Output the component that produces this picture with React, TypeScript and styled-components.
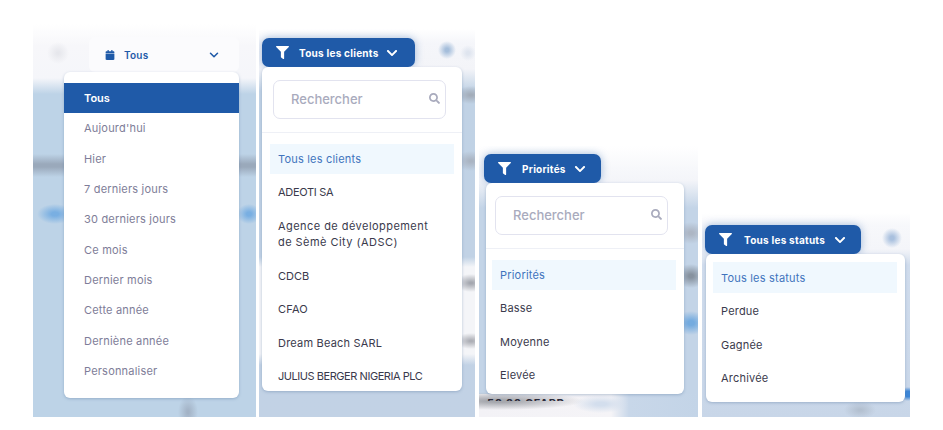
import React from "react";
import styled, { createGlobalStyle } from "styled-components";
import { FaFilter, FaChevronDown, FaSearch, FaCalendar } from "react-icons/fa";
import { ChevronDown } from "lucide-react";

const Global = createGlobalStyle`
  html, body { margin: 0; padding: 0; background: #fff; }
  body { font-family: "Inter", "Noto Sans", "Liberation Sans", sans-serif; }
`;

const Page = styled.div`
  width: 943px;
  height: 430px;
  box-sizing: border-box;
  padding: 0 0 13px 33px;
  display: flex;
  align-items: flex-end;
  overflow: hidden;
`;

const Panel = styled.section<{ $w: number; $h: number; $pl: number; $pt: number; $bg: string; $mr: number }>`
  width: ${(p) => p.$w}px;
  height: ${(p) => p.$h}px;
  margin-right: ${(p) => p.$mr}px;
  padding: ${(p) => p.$pt}px 0 0 ${(p) => p.$pl}px;
  box-sizing: border-box;
  flex: none;
  overflow: hidden;
  background: ${(p) => p.$bg};
`;

const GhostTrigger = styled.div`
  width: 150px;
  height: 35px;
  margin-left: 25px;
  box-sizing: border-box;
  padding: 0 18px 0 16px;
  display: flex;
  align-items: center;
  border-radius: 6px;
  background: #fbfbfd;
  color: #1f5aa8;
  font-size: 10px;
  font-weight: 600;
  letter-spacing: 0.2px;
  svg:first-child { margin-right: 9px; }
  span { flex: 1; }
`;

const SolidTrigger = styled.div<{ $w: number; $gap: number }>`
  width: ${(p) => p.$w}px;
  height: 29px;
  box-sizing: border-box;
  padding-left: 14px;
  display: flex;
  align-items: center;
  gap: ${(p) => p.$gap}px;
  border-radius: 7px;
  background: #1f5aa8;
  color: #fff;
  font-size: 10px;
  font-weight: 700;
  letter-spacing: 0.25px;
  white-space: nowrap;
  box-shadow: 0 0 9px rgba(31, 90, 168, 0.4);
`;

const Chevron = styled(FaChevronDown)`
  margin-left: -3px;
`;

const Menu = styled.div<{ $w: number; $h: number; $ml: number; $pt: number }>`
  width: ${(p) => p.$w}px;
  height: ${(p) => p.$h}px;
  margin-left: ${(p) => p.$ml}px;
  padding-top: ${(p) => p.$pt}px;
  box-sizing: border-box;
  position: relative;
  overflow: hidden;
  background: #fff;
  border-radius: 6px;
  box-shadow: 0 1px 3px rgba(90, 120, 160, 0.4);
`;

const PeriodItem = styled.div<{ $active?: boolean }>`
  height: 30.3px;
  padding-left: 20px;
  display: flex;
  align-items: center;
  font-size: 11px;
  letter-spacing: ${(p) => (p.$active ? 0 : 0.2)}px;
  font-weight: ${(p) => (p.$active ? 600 : 400)};
  color: ${(p) => (p.$active ? "#fff" : "#7e7d98")};
  background: ${(p) => (p.$active ? "#1f5aa8" : "transparent")};
`;

const SearchArea = styled.div<{ $left: number }>`
  padding: 13px 16px 13px ${(p) => p.$left}px;
  border-bottom: 1px solid #eef0f6;
`;

const SearchBox = styled.div`
  height: 39px;
  box-sizing: border-box;
  padding: 0 5px 2px 17px;
  display: flex;
  align-items: center;
  justify-content: space-between;
  border: 1px solid #e2e3ef;
  border-radius: 7px;
  color: #a9abbd;
  font-size: 13px;
  font-weight: 500;
`;

const List = styled.div<{ $pt: number; $left: number }>`
  padding: ${(p) => p.$pt}px 8px 0 ${(p) => p.$left}px;
`;

const Option = styled.div<{ $selected?: boolean; $h?: number; $ls?: number }>`
  min-height: ${(p) => p.$h ?? 33.5}px;
  padding: 0 8px;
  box-sizing: border-box;
  display: flex;
  align-items: center;
  font-size: 11px;
  line-height: 16px;
  letter-spacing: ${(p) => p.$ls ?? 0.2}px;
  color: ${(p) => (p.$selected ? "#3f74bd" : "#3a3a4c")};
  background: ${(p) => (p.$selected ? "#f0f8fe" : "transparent")};
`;

const SelectedSpacer = styled.div`
  height: 1.5px;
`;

const CutText = styled.div`
  height: 5px;
  margin: 2px 0 0 3px;
  overflow: hidden;
  font-size: 11px;
  line-height: 14px;
  font-weight: 700;
  letter-spacing: 0.6px;
  color: #2b2b3a;
  white-space: nowrap;
`;

const blueBase = "#bdd3e7";

const bg1 = `
  radial-gradient(ellipse 11px 11px at 25px 29px, #e6e7ec 10%, transparent 100%),
  radial-gradient(ellipse 10px 16px at 155px 388px, #a3b3c6 10%, transparent 100%),
  radial-gradient(ellipse 18px 10px at 22px 190px, #79afe2 20%, transparent 100%),
  radial-gradient(ellipse 12px 10px at 216px 190px, #79afe2 20%, transparent 100%),
  linear-gradient(to bottom, transparent 130px, #9aa9bb 140px, #9aa9bb 143px, transparent 153px),
  linear-gradient(to bottom, #fff 0, #f7f7fa 22px, #f5f6fa 54px, ${blueBase} 70px, ${blueBase} 100%)`;
const bg2 = `
  radial-gradient(ellipse 9px 9px at 188px 21px, #a5bedb 20%, transparent 100%),
  radial-gradient(ellipse 8px 8px at 209px 24px, #dfe5ef 20%, transparent 100%),
  radial-gradient(ellipse 16px 9px at 212px 66px, #a3adba 10%, transparent 100%),
  radial-gradient(ellipse 16px 10px at 212px 132px, #aab4c2 10%, transparent 100%),
  radial-gradient(ellipse 16px 9px at 212px 254px, #a5a8b0 10%, transparent 100%),
  radial-gradient(ellipse 16px 8px at 212px 312px, #adafb6 10%, transparent 100%),
  linear-gradient(to bottom, transparent 228px, #f4f5f8 238px, #f4f5f8 325px, transparent 336px),
  linear-gradient(to bottom, #fff 0, #f5f6fa 14px, #f3f4f8 40px, #c0d2e5 62px, #c2d2e5 100%)`;
const bg3 = `
  radial-gradient(ellipse 28px 9px at 122px 258px, #d3deed 20%, transparent 100%),
  radial-gradient(ellipse 85px 9px at 20px 255px, #a6a8ae 15%, transparent 100%),
  linear-gradient(to right, #f3f2f6 0, #f5f4f7 132px, #c8d7e9 150px, #c3d4e7 100%) no-repeat 0 248px / 100% 23px,
  radial-gradient(ellipse 16px 12px at 212px 177px, #74abdf 20%, transparent 100%),
  radial-gradient(ellipse 15px 12px at 212px 130px, #87929f 15%, transparent 100%),
  radial-gradient(ellipse 15px 11px at 212px 87px, #adb6c4 15%, transparent 100%),
  linear-gradient(to bottom, #fff 0, #f7f8fb 22px, #f4f5f9 34px, #c3d4e7 62px, #c3d4e7 100%)`;
const bg4 = `
  radial-gradient(ellipse 10px 10px at 190px 25px, #a9c0de 20%, transparent 100%),
  radial-gradient(ellipse 16px 9px at 158px 197px, #b3c0d0 10%, transparent 100%),
  radial-gradient(ellipse 9px 7px at 206px 181px, #3d86d6 40%, transparent 100%),
  linear-gradient(to bottom, #fff 0, #f7f8fb 12px, #f4f5f9 36px, #d0dcec 52px, #c8d6e8 100%)`;

const periods = [
  "Aujourd'hui",
  "Hier",
  "7 derniers jours",
  "30 derniers jours",
  "Ce mois",
  "Dernier mois",
  "Cette année",
  "Derniène année",
  "Personnaliser",
];

const Search = ({ left }: { left: number }) => (
  <SearchArea $left={left}>
    <SearchBox>
      Rechercher
      <FaSearch size={11} color="#a9abbd" />
    </SearchBox>
  </SearchArea>
);

const Trigger = ({ w, gap, label }: { w: number; gap: number; label: string }) => (
  <SolidTrigger $w={w} $gap={gap}>
    <FaFilter size={13} />
    <span>{label}</span>
    <Chevron size={12} />
  </SolidTrigger>
);

export default function App() {
  return (
    <Page>
      <Global />
      <Panel $w={223} $h={393} $pl={31} $pt={13} $mr={3} $bg={bg1}>
        <GhostTrigger>
          <FaCalendar size={10} />
          <span>Tous</span>
          <ChevronDown size={14} strokeWidth={2.6} />
        </GhostTrigger>
        <Menu $w={175} $h={326} $ml={0} $pt={11}>
          <PeriodItem $active>Tous</PeriodItem>
          {periods.map((p) => (
            <PeriodItem key={p}>{p}</PeriodItem>
          ))}
        </Menu>
      </Panel>
      <Panel $w={216} $h={388} $pl={3} $pt={9} $mr={4} $bg={bg2}>
        <Trigger w={153} gap={10} label="Tous les clients" />
        <Menu $w={200} $h={324} $ml={0} $pt={0}>
          <Search left={11} />
          <List $pt={11} $left={8}>
            <Option $selected $h={30}>Tous les clients</Option>
            <SelectedSpacer />
            <Option $ls={-0.3}>ADEOTI SA</Option>
            <Option $h={50} $ls={0.45}>Agence de développement<br />de Sèmè City (ADSC)</Option>
            <Option $ls={0}>CDCB</Option>
            <Option>CFAO</Option>
            <Option>Dream Beach SARL</Option>
            <Option $ls={-0.45}>JULIUS BERGER NIGERIA PLC</Option>
          </List>
        </Menu>
      </Panel>
      <Panel $w={219} $h={271} $pl={5} $pt={8} $mr={4} $bg={bg3}>
        <Trigger w={117} gap={11} label="Priorités" />
        <Menu $w={198} $h={211} $ml={2} $pt={0}>
          <Search left={9} />
          <List $pt={11} $left={6}>
            <Option $selected $h={30}>Priorités</Option>
            <SelectedSpacer />
            <Option>Basse</Option>
            <Option>Moyenne</Option>
            <Option>Elevée</Option>
          </List>
        </Menu>
        <CutText>50 00 CFARD</CutText>
      </Panel>
      <Panel $w={208} $h={204} $pl={3} $pt={12} $mr={0} $bg={bg4}>
        <Trigger w={156} gap={12} label="Tous les statuts" />
        <Menu $w={199} $h={148} $ml={1} $pt={0}>
          <List $pt={8} $left={7}>
            <Option $selected $h={31}>Tous les statuts</Option>
            <SelectedSpacer />
            <Option>Perdue</Option>
            <Option>Gagnée</Option>
            <Option>Archivée</Option>
          </List>
        </Menu>
      </Panel>
    </Page>
  );
}
